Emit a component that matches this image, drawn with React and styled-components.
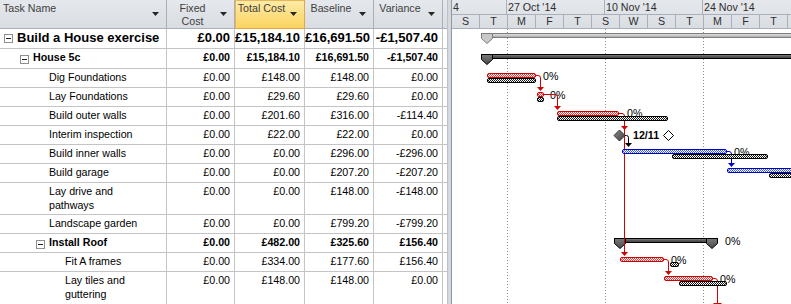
import React from "react";
import styled, { createGlobalStyle, css } from "styled-components";

const GlobalStyle = createGlobalStyle`
  html, body {
    margin: 0;
    padding: 0;
    background: #ffffff;
    overflow: hidden;
  }
  body {
    font-family: "Liberation Sans", Arial, sans-serif;
  }
`;

const GRID = "167px 68px 70px 69px 69px 4px";
const LINE = "#c4c4c4";
const HEAD_LINE = "#a9b0b9";
const HEAD_BG = "linear-gradient(#e5e8ec, #d9dde2)";
const FONT = '"Liberation Sans", Arial, sans-serif';

const columns = [
  { key: "name", label: "Task Name", left: true },
  { key: "fixed", label: "Fixed\nCost" },
  { key: "total", label: "Total Cost", active: true },
  { key: "base", label: "Baseline" },
  { key: "variance", label: "Variance" },
];

const tasks = [
  { name: "Build a House exercise", level: 0, summary: true, big: true, h: 20, fixed: "£0.00", total: "£15,184.10", base: "£16,691.50", variance: "-£1,507.40" },
  { name: "House 5c", level: 1, summary: true, h: 20, fixed: "£0.00", total: "£15,184.10", base: "£16,691.50", variance: "-£1,507.40" },
  { name: "Dig Foundations", level: 2, h: 19, fixed: "£0.00", total: "£148.00", base: "£148.00", variance: "£0.00" },
  { name: "Lay Foundations", level: 2, h: 19, fixed: "£0.00", total: "£29.60", base: "£29.60", variance: "£0.00" },
  { name: "Build outer walls", level: 2, h: 19, fixed: "£0.00", total: "£201.60", base: "£316.00", variance: "-£114.40" },
  { name: "Interim inspection", level: 2, h: 19, fixed: "£0.00", total: "£22.00", base: "£22.00", variance: "£0.00" },
  { name: "Build inner walls", level: 2, h: 19, fixed: "£0.00", total: "£0.00", base: "£296.00", variance: "-£296.00" },
  { name: "Build garage", level: 2, h: 19, fixed: "£0.00", total: "£0.00", base: "£207.20", variance: "-£207.20" },
  { name: "Lay drive and\npathways", level: 2, h: 32, fixed: "£0.00", total: "£0.00", base: "£148.00", variance: "-£148.00" },
  { name: "Landscape garden", level: 2, h: 19, fixed: "£0.00", total: "£0.00", base: "£799.20", variance: "-£799.20" },
  { name: "Install Roof", level: 2, summary: true, h: 19, fixed: "£0.00", total: "£482.00", base: "£325.60", variance: "£156.40" },
  { name: "Fit A frames", level: 3, h: 19, fixed: "£0.00", total: "£334.00", base: "£177.60", variance: "£156.40" },
  { name: "Lay tiles and\nguttering", level: 3, h: 40, fixed: "£0.00", total: "£148.00", base: "£148.00", variance: "£0.00" },
];

// the first week is scrolled mostly out of view, only the tail of its label shows
const majorTicks = [
  { label: "4", w: 55 },
  { label: "27 Oct '14", w: 98 },
  { label: "10 Nov '14", w: 98 },
  { label: "24 Nov '14", w: 98 },
];
const minorTicks = ["S", "T", "M", "F", "T", "S", "W", "S", "T", "M", "F", "T"];

const Screen = styled.div`
  display: flex;
  width: 791px;
  height: 304px;
  overflow: hidden;
  background: #fff;
  font-family: ${FONT};
`;

const Sheet = styled.div`
  flex: none;
  width: 447px;
  display: flex;
  flex-direction: column;
`;

const HeadRow = styled.div`
  display: grid;
  grid-template-columns: ${GRID};
  height: 29px;
`;

const HeadCell = styled.div`
  box-sizing: border-box;
  display: flex;
  align-items: center;
  gap: 2px;
  padding: 0 7px 0 ${(p) => (p.$left ? 3 : 0)}px;
  background: ${HEAD_BG};
  border-right: 1px solid ${HEAD_LINE};
  border-bottom: 1px solid ${HEAD_LINE};
  color: #3f3f3f;
  font-size: 10.67px;
  ${(p) =>
    p.$active &&
    css`
      background: linear-gradient(#fdeba9, #fbd460);
      border-right-color: #e2a843;
      border-bottom-color: #e2a843;
      box-shadow: inset 1px 1px 0 #e8b65a;
    `}
`;

const HeadLabel = styled.div`
  flex: 1;
  align-self: flex-start;
  padding-top: 2px;
  line-height: 13px;
  white-space: pre-line;
  text-align: ${(p) => (p.$left ? "left" : "center")};
`;

const Caret = styled.svg`
  flex: none;
  width: 7px;
  height: 4px;
  fill: #262626;
`;

const Row = styled.div`
  display: grid;
  grid-template-columns: ${GRID};
  height: ${(p) => p.$h}px;
  flex: none;
`;

const Cell = styled.div`
  box-sizing: border-box;
  border-right: 1px solid ${LINE};
  border-bottom: 1px solid ${LINE};
  padding: 1px 4px 0 0;
  line-height: 14px;
  font-size: 10.67px;
  font-weight: ${(p) => (p.$bold ? 700 : 400)};
  text-align: right;
  white-space: nowrap;
  color: #000;
  ${(p) =>
    p.$big &&
    css`
      font-size: 13px;
      line-height: 16px;
    `}
`;

const NameCell = styled(Cell)`
  display: flex;
  align-items: flex-start;
  gap: 4px;
  text-align: left;
  white-space: pre-line;
  padding-left: ${(p) => 4 + p.$level * 16 + (p.$summary ? 0 : 13)}px;
`;

const Filler = styled.div`
  border-bottom: 1px solid ${(p) => (p.$head ? HEAD_LINE : LINE)};
  background: ${(p) => (p.$head ? HEAD_BG : "#fff")};
`;

const Toggle = styled.span`
  flex: none;
  position: relative;
  box-sizing: border-box;
  width: 9px;
  height: 9px;
  margin-top: ${(p) => (p.$big ? 4 : 5)}px;
  border: 1px solid #8f8f8f;
  background: #fff;

  &::after {
    content: "";
    position: absolute;
    left: 1px;
    top: 3px;
    width: 5px;
    height: 1px;
    background: #222;
  }
`;

const Splitter = styled.div`
  flex: none;
  box-sizing: border-box;
  width: 5px;
  background: #d5d9de;
  border-left: 1px solid #bcc2c9;
  border-right: 1px solid #8f97a1;
`;

const Gantt = styled.div`
  flex: 1;
  min-width: 0;
  display: flex;
  flex-direction: column;
  overflow: hidden;
`;

const Timescale = styled.div`
  flex: none;
  background: ${HEAD_BG};
  color: #2e2e2e;
  font-size: 10.67px;
`;

const Tier = styled.div`
  display: flex;
  box-sizing: border-box;
  height: ${(p) => p.$h}px;
  border-bottom: 1px solid ${HEAD_LINE};
  line-height: ${(p) => p.$h - 1}px;
  white-space: nowrap;
  overflow: hidden;
`;

const TickCell = styled.div`
  flex: none;
  box-sizing: border-box;
  width: ${(p) => p.$w}px;
  overflow: hidden;
  border-right: 1px solid ${HEAD_LINE};
  padding-left: ${(p) => (p.$center ? 0 : 1)}px;
  text-align: ${(p) => (p.$center ? "center" : "left")};
`;

const Chart = styled.svg`
  display: block;
  flex: none;
`;

const RED = "#d20000";
const BLUE = "#0000cc";

function Bar({ x1, x2, y, fill, stroke }) {
  return (
    <rect
      x={x1 + 0.5}
      y={y + 0.5}
      width={x2 - x1 - 1}
      height={4}
      rx={1.5}
      fill={fill}
      stroke={stroke}
    />
  );
}

function Cap({ x, y, fill, stroke }) {
  const pts = `${x + 0.5},${y + 0.5} ${x + 11.5},${y + 0.5} ${x + 11.5},${y + 5.5} ${x + 6},${y + 10.5} ${x + 0.5},${y + 5.5}`;
  return <polygon points={pts} fill={fill} stroke={stroke} />;
}

function Summary({ x1, x2, y, light, endCap }) {
  const fill = light ? "url(#sumLight)" : "url(#sumDark)";
  const stroke = light ? "#7d7d7d" : "#000";
  const capFill = light ? "#c9c9c9" : "url(#capDark)";
  return (
    <g>
      <rect x={x1 + 0.5} y={y + 0.5} width={x2 - x1 - 1} height={4} fill={fill} stroke={stroke} />
      <Cap x={x1} y={y} fill={capFill} stroke={stroke} />
      {endCap && <Cap x={x2 - 12} y={y} fill={capFill} stroke={stroke} />}
    </g>
  );
}

function Link({ d, color, arrows = [], tee }) {
  return (
    <g>
      <path d={d} fill="none" stroke={color} strokeWidth={1} />
      {arrows.map(([x, y], i) => (
        <polygon key={i} points={`${x - 3.5},${y - 4} ${x + 3.5},${y - 4} ${x},${y}`} fill={color} />
      ))}
      {tee && <path d={`M${tee[0] - 4},${tee[1]}H${tee[0] + 4}`} stroke={color} />}
    </g>
  );
}

function Label({ x, y, children, bold }) {
  return (
    <text x={x} y={y + 3.8} fontFamily={FONT} fontSize="10.67" fontWeight={bold ? 700 : 400} fill="#000">
      {children}
    </text>
  );
}

function Checker({ id, ink }) {
  return (
    <pattern id={id} width="2" height="2" patternUnits="userSpaceOnUse">
      <rect width="2" height="2" fill="#fff" />
      <rect width="1" height="1" fill={ink} />
      <rect x="1" y="1" width="1" height="1" fill={ink} />
    </pattern>
  );
}

function GanttChart() {
  return (
    <Chart width="339" height="275" viewBox="452 29 339 275">
      <defs>
        <Checker id="crit" ink="#e23a3a" />
        <Checker id="base" ink="#1a1a1a" />
        <Checker id="blue" ink="#3d5ee0" />
        <linearGradient id="sumDark" x1="0" y1="0" x2="0" y2="1">
          <stop offset="0" stopColor="#8c8c8c" />
          <stop offset="0.45" stopColor="#5c5c5c" />
          <stop offset="1" stopColor="#3a3a3a" />
        </linearGradient>
        <linearGradient id="sumLight" x1="0" y1="0" x2="0" y2="1">
          <stop offset="0" stopColor="#e4e4e4" />
          <stop offset="0.5" stopColor="#c8c8c8" />
          <stop offset="1" stopColor="#a6a6a6" />
        </linearGradient>
        <linearGradient id="capDark" x1="0" y1="0" x2="0" y2="1">
          <stop offset="0" stopColor="#7a7a7a" />
          <stop offset="1" stopColor="#4a4a4a" />
        </linearGradient>
        <linearGradient id="mile" x1="0" y1="0" x2="1" y2="1">
          <stop offset="0" stopColor="#8a8a8a" />
          <stop offset="1" stopColor="#404040" />
        </linearGradient>
      </defs>

      {[507.5, 605.5, 703.5].map((x) => (
        <line key={x} x1={x} y1={29} x2={x} y2={304} stroke="#8c8c8c" strokeDasharray="1 2" />
      ))}

      <Label x={543} y={76}>0%</Label>
      <Label x={550} y={95.5}>0%</Label>
      <Label x={627} y={113}>0%</Label>
      <Label x={633} y={135.5} bold>12/11</Label>
      <Label x={734} y={152}>0%</Label>
      <Label x={725} y={241}>0%</Label>
      <Label x={671} y={260}>0%</Label>
      <Label x={720} y={279}>0%</Label>

      <Summary x1={481} x2={800} y={33} light />
      <Summary x1={481} x2={800} y={54} />
      <Summary x1={614} x2={718} y={238} endCap />

      <Link d="M536,75.5H538Q540.5,75.5 540.5,78V87" color={RED} arrows={[[540.5, 91]]} />
      <Link d="M543,94.5H555Q557.5,94.5 557.5,97V106" color={RED} arrows={[[557.5, 110]]} />
      <Link d="M618,113.5H622Q624.5,113.5 624.5,116V253" color={RED} arrows={[[624.5, 130], [624.5, 256]]} />
      <Link d="M625,135.5H626.5Q628.5,135.5 628.5,137.5V143" color="#000" arrows={[[628.5, 147]]} />
      <Link d="M726,151.5H729Q731.5,151.5 731.5,154V163" color={BLUE} arrows={[[731.5, 167]]} />
      <Link d="M663,259.5H666Q668.5,259.5 668.5,262V271" color={RED} arrows={[[668.5, 275]]} />
      <Link d="M712,278.5H715Q717.5,278.5 717.5,281V303.5" color={RED} tee={[717.5, 303.5]} />

      <Bar x1={487} x2={536} y={73} fill="url(#crit)" stroke={RED} />
      <Bar x1={487} x2={536} y={78} fill="url(#base)" stroke="#000" />
      <Bar x1={537} x2={544} y={92} fill="url(#crit)" stroke={RED} />
      <Bar x1={537} x2={544} y={97} fill="url(#base)" stroke="#000" />
      <Bar x1={557} x2={619} y={111} fill="url(#crit)" stroke={RED} />
      <Bar x1={557} x2={668} y={116} fill="url(#base)" stroke="#000" />
      <Bar x1={622} x2={727} y={149} fill="url(#blue)" stroke={BLUE} />
      <Bar x1={672} x2={768} y={154} fill="url(#base)" stroke="#000" />
      <Bar x1={727} x2={800} y={168} fill="url(#blue)" stroke={BLUE} />
      <Bar x1={769} x2={800} y={173} fill="url(#base)" stroke="#000" />
      <Bar x1={620} x2={664} y={257} fill="url(#crit)" stroke={RED} />
      <Bar x1={670} x2={679} y={262} fill="url(#base)" stroke="#000" />
      <Bar x1={664} x2={713} y={276} fill="url(#crit)" stroke={RED} />
      <Bar x1={679} x2={727} y={281} fill="url(#base)" stroke="#000" />

      <polygon points="619.5,130 625,135.5 619.5,141 614,135.5" fill="url(#mile)" stroke="#333" />
      <polygon points="668.5,130.5 673.5,135.5 668.5,140.5 663.5,135.5" fill="#fff" stroke="#000" />
    </Chart>
  );
}

export default function App() {
  return (
    <>
      <GlobalStyle />
      <Screen>
        <Sheet>
          <HeadRow>
            {columns.map((c) => (
              <HeadCell key={c.key} $left={c.left} $active={c.active}>
                <HeadLabel $left={c.left}>{c.label}</HeadLabel>
                <Caret viewBox="0 0 7 4">
                  <path d="M0 0H7L3.5 4Z" />
                </Caret>
              </HeadCell>
            ))}
            <Filler $head />
          </HeadRow>
          {tasks.map((t) => (
            <Row key={t.name} $h={t.h}>
              <NameCell $level={t.level} $summary={t.summary} $bold={t.summary} $big={t.big}>
                {t.summary && <Toggle $big={t.big} />}
                <span>{t.name}</span>
              </NameCell>
              <Cell $bold={t.summary} $big={t.big}>{t.fixed}</Cell>
              <Cell $bold={t.summary} $big={t.big}>{t.total}</Cell>
              <Cell $bold={t.summary} $big={t.big}>{t.base}</Cell>
              <Cell $bold={t.summary} $big={t.big}>{t.variance}</Cell>
              <Filler />
            </Row>
          ))}
        </Sheet>
        <Splitter />
        <Gantt>
          <Timescale>
            <Tier $h={15}>
              {majorTicks.map((m) => (
                <TickCell key={m.label} $w={m.w}>{m.label}</TickCell>
              ))}
            </Tier>
            <Tier $h={14}>
              {minorTicks.map((m, i) => (
                <TickCell key={i} $w={28} $center>{m}</TickCell>
              ))}
            </Tier>
          </Timescale>
          <GanttChart />
        </Gantt>
      </Screen>
    </>
  );
}
